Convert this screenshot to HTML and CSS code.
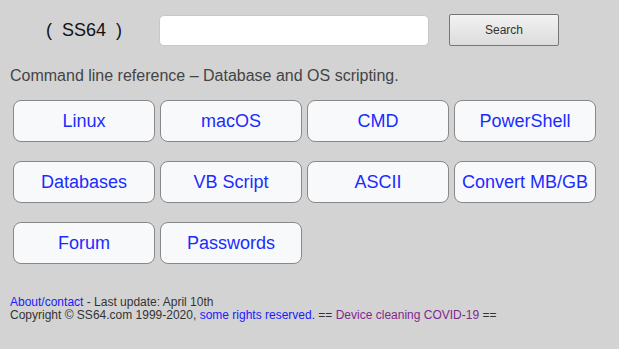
FILE: index.html
```html
<!DOCTYPE html>
<html lang="en">
<head>
<meta charset="UTF-8">
<meta name="viewport" content="width=device-width, initial-scale=1.0">
<title>SS64 Command line reference</title>
<link rel="stylesheet" href="styles.css">
</head>
<body>

<div class="header">
    <div class="logo">(&nbsp; SS64 &nbsp;)</div>
    <form class="search">
        <input type="text" class="search-box">
        <button type="submit" class="search-btn">Search</button>
    </form>
</div>

<p class="tagline">Command line reference &ndash; Database and OS scripting.</p>

<!-- Menu principal -->
<div class="menu">
    <a class="tile" href="#">Linux</a>
    <a class="tile" href="#">macOS</a>
    <a class="tile" href="#">CMD</a>
    <a class="tile" href="#">PowerShell</a>
    <a class="tile" href="#">Databases</a>
    <a class="tile" href="#">VB Script</a>
    <a class="tile" href="#">ASCII</a>
    <a class="tile" href="#">Convert MB/GB</a>
    <a class="tile" href="#">Forum</a>
    <a class="tile" href="#">Passwords</a>
</div>

<div class="footer">
    <a href="#">About/contact</a> - Last update: April 10th<br>
    Copyright &copy; SS64.com 1999-2020, <a href="#">some rights reserved.</a> == <a class="visited" href="#">Device cleaning COVID-19</a> ==
</div>

</body>
</html>
```

FILE: styles.css
```css
body {
    font-family: "Liberation Sans", Arial, sans-serif;
    background-color: #d3d3d3;
    margin: 0;
    padding: 14px 10px 0 10px;
    color: #444;
}

.header {
    display: flex;
    align-items: center;
    height: 32px;
}

.logo {
    width: 149px;
    padding-left: 36px;
    box-sizing: border-box;
    font-size: 18px;
    color: #111;
}

.search {
    display: flex;
    align-items: center;
    margin: 0;
}

.search-box {
    width: 270px;
    height: 31px;
    box-sizing: border-box;
    border: 1px solid #c8c8c8;
    border-radius: 5px;
    background-color: #fff;
    margin: 0 20px 0 0;
}

.search-btn {
    width: 110px;
    height: 32px;
    font-family: "Liberation Sans", Arial, sans-serif;
    font-size: 12px;
    color: #333;
    border: 1px solid #777;
    border-radius: 2px;
    background: linear-gradient(#f2f2f2, #dcdcdc);
    cursor: pointer;
}

.tagline {
    margin: 21px 0 15px 0;
    font-size: 16px;
    line-height: 18px;
    color: #444;
}

.menu {
    display: grid;
    grid-template-columns: repeat(4, 142px);
    column-gap: 5px;
    row-gap: 19px;
    padding-left: 3px;
}

.tile {
    display: flex;
    align-items: center;
    justify-content: center;
    height: 42px;
    box-sizing: border-box;
    border: 1px solid #888;
    border-radius: 8px;
    background-color: #f8f9fb;
    color: #1a2cff;
    font-size: 18px;
    text-decoration: none;
}

.footer {
    margin-top: 32px;
    font-size: 12px;
    line-height: 13px;
    color: #333;
}

.footer a {
    color: #1a1aff;
    text-decoration: none;
}

.footer a.visited {
    color: #7f2a8c;
}
```
